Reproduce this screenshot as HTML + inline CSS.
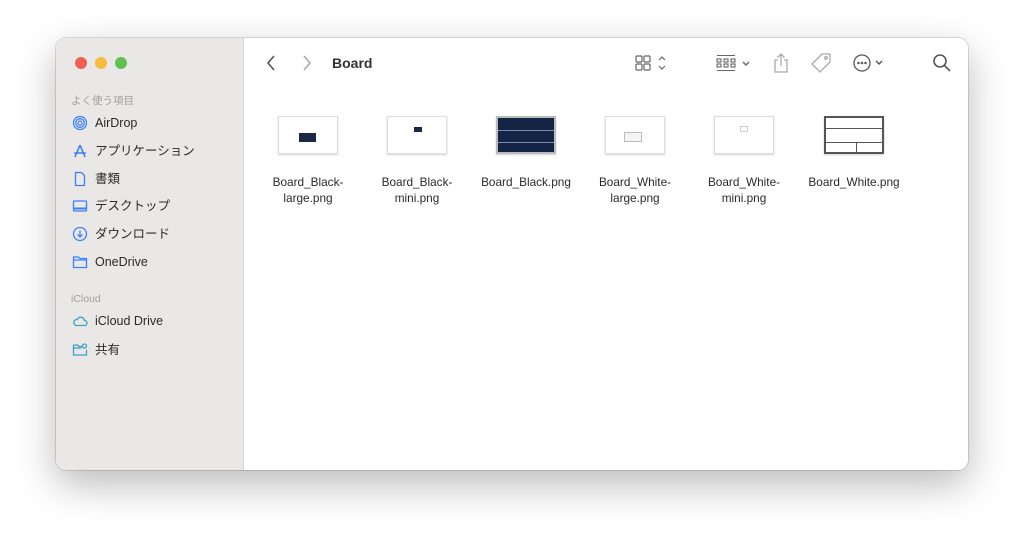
<!DOCTYPE html>
<html><head><meta charset="utf-8"><style>
*{margin:0;padding:0;box-sizing:border-box}
body{width:1024px;height:544px;background:#fff;font-family:"Liberation Sans","Noto Sans CJK JP",sans-serif;position:relative;overflow:hidden}
.win{position:absolute;left:56px;top:38px;width:912px;height:432px;border-radius:10px;background:#fff;box-shadow:0 14px 40px rgba(0,0,0,.28),0 0 0 1px rgba(0,0,0,.12);overflow:hidden}
.side{position:absolute;left:0;top:0;width:188px;height:432px;background:#e9e8e7;border-right:1px solid #d6d5d4}
.dot{position:absolute;top:19px;width:12px;height:12px;border-radius:50%}
.h{position:absolute;left:15px;font-size:10.5px;color:#a09f9e}
.it{position:absolute;left:16px;height:20px;line-height:20px;font-size:12.5px;color:#2a2a2a;display:flex;align-items:center}
.it svg{width:16px;height:16px;margin-right:7px;flex:none}
.title{position:absolute;left:276px;top:16px;font-size:14px;font-weight:bold;color:#333}
.tb{position:absolute;top:14px}
.f{position:absolute;top:78px;width:100px;text-align:center;font-size:11.8px;line-height:16px;color:#2a2a2a}
.th{width:60px;height:38px;margin:0 auto 20px;background:#fff;border:1px solid #ddd;box-shadow:0 1px 2px rgba(0,0,0,.18);position:relative}
</style></head><body>
<div class="win">
<div class="side">
<div class="dot" style="left:19px;background:#ee5f57"></div>
<div class="dot" style="left:39px;background:#f5bd3e"></div>
<div class="dot" style="left:59px;background:#5fc04f"></div>
<div class="h" style="top:55px">よく使う項目</div>
<div class="it" style="top:75px"><svg viewBox="0 0 16 16" fill="none" stroke="#3a82f7" stroke-width="1.3"><circle cx="8" cy="8" r="6.5"/><circle cx="8" cy="8" r="4.3"/><circle cx="8" cy="8" r="2"/></svg>AirDrop</div>
<div class="it" style="top:103px"><svg viewBox="0 0 16 16" fill="none" stroke="#3a82f7" stroke-width="1.6"><path d="M8 2L3 14M8 2l5 12M2 10h12"/></svg>アプリケーション</div>
<div class="it" style="top:131px"><svg viewBox="0 0 16 16" fill="none" stroke="#3a82f7" stroke-width="1.3"><path d="M3.5 1.5h6l3 3v10h-9z"/></svg>書類</div>
<div class="it" style="top:158px"><svg viewBox="0 0 16 16" fill="none" stroke="#3a82f7" stroke-width="1.3"><rect x="1.5" y="3" width="13" height="10" rx="1"/><path d="M2 10.5h12" stroke-width="2"/></svg>デスクトップ</div>
<div class="it" style="top:186px"><svg viewBox="0 0 16 16" fill="none" stroke="#3a82f7" stroke-width="1.3"><circle cx="8" cy="8" r="6.5"/><path d="M8 4.5v6M5.5 8.5L8 11l2.5-2.5"/></svg>ダウンロード</div>
<div class="it" style="top:214px"><svg viewBox="0 0 16 16" fill="none" stroke="#3a82f7" stroke-width="1.3"><path d="M1.5 3h5l1.5 1.5h6.5v9h-13zM1.5 6h13"/></svg>OneDrive</div>
<div class="h" style="top:255px">iCloud</div>
<div class="it" style="top:273px"><svg viewBox="0 0 16 16" fill="none" stroke="#35a3c9" stroke-width="1.3"><path d="M4.5 12.5h8a2.5 2.5 0 0 0 0-5 4 4 0 0 0-7.5-1A3 3 0 0 0 4.5 12.5z"/></svg>iCloud Drive</div>
<div class="it" style="top:302px"><svg viewBox="0 0 16 16" fill="none" stroke="#35a3c9" stroke-width="1.3"><path d="M1.5 3h4l1.5 1.5h3M1.5 3v10h13V8M1.5 6h8"/><circle cx="12.5" cy="4" r="2"/></svg>共有</div>
</div>
<svg class="tb" style="left:210px;top:15px" width="12" height="20" viewBox="0 0 12 20" fill="none" stroke="#555" stroke-width="1.6"><path d="M8 3L2 10l6 7"/></svg>
<svg class="tb" style="left:245px;top:15px" width="12" height="20" viewBox="0 0 12 20" fill="none" stroke="#aaa" stroke-width="1.6"><path d="M3 3l6 7-6 7"/></svg>
<div class="title" style="top:17px">Board</div>
<svg class="tb" style="left:578px;top:16px" width="34" height="18" viewBox="0 0 34 18" fill="none" stroke="#666" stroke-width="1.2"><rect x="2" y="2" width="6" height="6" rx="1"/><rect x="10" y="2" width="6" height="6" rx="1"/><rect x="2" y="10" width="6" height="6" rx="1"/><rect x="10" y="10" width="6" height="6" rx="1"/><path d="M25 6l3-3 3 3M25 12l3 3 3-3"/></svg>
<svg class="tb" style="left:659px;top:16px" width="40" height="18" viewBox="0 0 40 18" fill="none" stroke="#666" stroke-width="1.1"><path d="M2 1.5h18M2 16.5h18"/><rect x="2" y="5" width="4" height="3"/><rect x="9" y="5" width="4" height="3"/><rect x="16" y="5" width="4" height="3"/><rect x="2" y="10" width="4" height="3"/><rect x="9" y="10" width="4" height="3"/><rect x="16" y="10" width="4" height="3"/><path d="M28 8l3 3 3-3" stroke-width="1.4"/></svg>
<svg class="tb" style="left:716px;top:14px" width="18" height="22" viewBox="0 0 18 22" fill="none" stroke="#aaa" stroke-width="1.3"><path d="M9 2v12M5.5 5.5L9 2l3.5 3.5M6 8H3v12h12V8h-3"/></svg>
<svg class="tb" style="left:754px;top:14px" width="22" height="22" viewBox="0 0 22 22" fill="none" stroke="#aaa" stroke-width="1.3"><path d="M12 2h8v8L10 20 2 12z"/><circle cx="16" cy="6" r="1.3"/></svg>
<svg class="tb" style="left:796px;top:15px" width="36" height="20" viewBox="0 0 36 20" fill="none" stroke="#555" stroke-width="1.3"><circle cx="10" cy="10" r="8"/><circle cx="6.5" cy="10" r=".6" fill="#555"/><circle cx="10" cy="10" r=".6" fill="#555"/><circle cx="13.5" cy="10" r=".6" fill="#555"/><path d="M24 8l3 3 3-3" stroke-width="1.4"/></svg>
<svg class="tb" style="left:876px;top:15px" width="20" height="20" viewBox="0 0 20 20" fill="none" stroke="#555" stroke-width="1.6"><circle cx="8" cy="8" r="6"/><path d="M12.5 12.5L18 18"/></svg>

<div class="f" style="left:202px"><div class="th"><div style="position:absolute;left:20px;top:16px;width:17px;height:9px;background:#1c2846"></div></div>Board_Black-<br>large.png</div>
<div class="f" style="left:311px"><div class="th"><div style="position:absolute;left:26px;top:10px;width:8px;height:5px;background:#1c2846"></div></div>Board_Black-<br>mini.png</div>
<div class="f" style="left:420px"><div class="th" style="background:#142444;border:2px solid #bbb"><div style="position:absolute;left:0;right:0;top:12px;height:1px;background:#7a8aa8"></div><div style="position:absolute;left:0;right:0;top:24px;height:1px;background:#7a8aa8"></div></div>Board_Black.png</div>
<div class="f" style="left:529px"><div class="th"><div style="position:absolute;left:18px;top:15px;width:18px;height:10px;border:1px solid #bbb;background:#f4f4f4"></div></div>Board_White-<br>large.png</div>
<div class="f" style="left:638px"><div class="th"><div style="position:absolute;left:25px;top:9px;width:8px;height:6px;border:1px solid #ccc"></div></div>Board_White-<br>mini.png</div>
<div class="f" style="left:748px"><div class="th" style="border:2px solid #555"><div style="position:absolute;left:0;right:0;top:10px;height:1px;background:#555"></div><div style="position:absolute;left:0;right:0;top:24px;height:1px;background:#555"></div><div style="position:absolute;left:30px;top:24px;bottom:0;width:1px;background:#555"></div></div>Board_White.png</div>
</div>
</body></html>
